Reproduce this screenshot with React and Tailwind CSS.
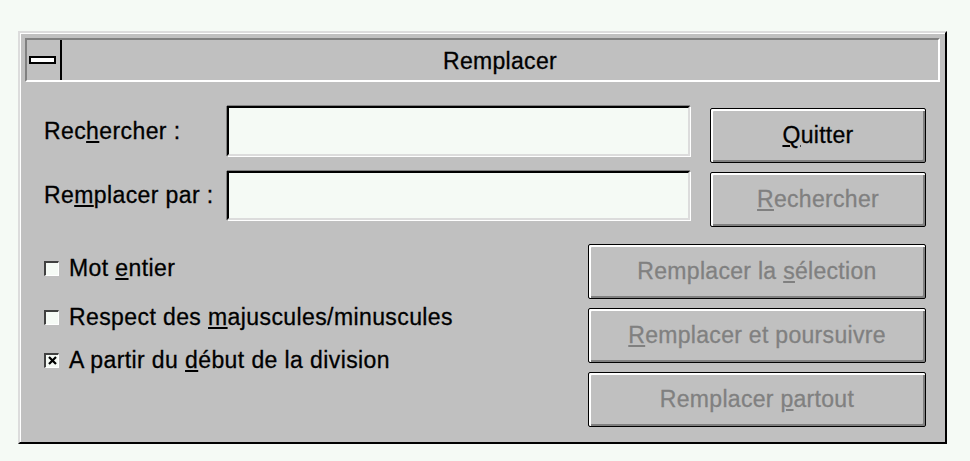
import React from "react";

const font = { fontFamily: '"Liberation Sans", Arial, sans-serif' };

function Btn({ children, disabled, className = "" }) {
  return (
    <div
      className={
        "flex items-center justify-center h-[55px] border border-black rounded-[2px] bg-[#c0c0c0] shadow-[inset_2px_2px_0_#ffffff,inset_-2px_-2px_0_#808080] text-[23px] tracking-[0.3px] " +
        (disabled ? "text-[#808080] " : "text-black ") +
        className
      }
    >
      <span>{children}</span>
    </div>
  );
}

function Check({ checked, children, className = "" }) {
  return (
    <div className={"flex items-center h-[26px] " + className}>
      <div className="w-[15px] h-[15px] flex items-center justify-center bg-[#f5faf5] border-t-2 border-l-2 border-[#404040] border-b border-r border-b-[#ffffff] border-r-[#ffffff]">
        {checked && (
          <svg width="9" height="9" viewBox="0 0 9 9">
            <path d="M1 1 L8 8 M8 1 L1 8" stroke="#000" strokeWidth="2.2" />
          </svg>
        )}
      </div>
      <span className="ml-[10px] text-[23px] tracking-[0.4px] text-black">{children}</span>
    </div>
  );
}

function Field() {
  return (
    <div className="w-[463px] h-full bg-[#f5faf5] border-t-2 border-l-2 border-t-[#000] border-l-[#000] border-b-2 border-r-2 border-b-[#dcdcdc] border-r-[#dcdcdc] shadow-[0_-1px_0_#808080,-1px_0_0_#808080,1px_1px_0_#ffffff]" />
  );
}

export default function App() {
  return (
    <div className="h-[461px] w-[970px] bg-[#f5faf5] pt-[31px] pl-[18px] [-webkit-text-stroke:0.3px]" style={font}>
      <div className="w-[929px] h-[413px] bg-[#c0c0c0] border-2 border-t-[#dcdcdc] border-l-[#dcdcdc] border-b-black border-r-black shadow-[inset_1px_1px_0_#ffffff] p-[5px]">
        {/* barre de titre */}
        <div className="h-[44px] flex border-2 border-t-[#808080] border-l-[#808080] border-b-white border-r-white">
          <div className="w-[35px] border-r-2 border-black flex items-center pl-[2px]">
            <div className="w-[27px] h-[8px] bg-white border-2 border-black" />
          </div>
          <div className="flex-1 flex items-center justify-center text-[23px] tracking-[0.3px] text-black pt-[2px]">
            Remplacer
          </div>
        </div>

        {/* champs */}
        <div className="flex mt-[24px] pl-[19px]">
          <div className="flex flex-col gap-[15px]">
            <div className="flex items-center h-[50px]">
              <span className="w-[183px] text-[23px] tracking-[0.4px] text-black">
                Rec<u className="underline-offset-2">h</u>ercher :
              </span>
              <Field />
            </div>
            <div className="flex items-center h-[49px]">
              <span className="w-[183px] text-[23px] tracking-[0.4px] text-black">
                Re<u className="underline-offset-2">m</u>placer par :
              </span>
              <Field />
            </div>
          </div>
          <div className="flex flex-col gap-[9px] ml-[20px] mt-[2px] w-[216px]">
            <Btn>
              <u className="underline-offset-2">Q</u>uitter
            </Btn>
            <Btn disabled>
              <u className="underline-offset-2">R</u>echercher
            </Btn>
          </div>
        </div>

        {/* options */}
        <div className="flex mt-[17px] pl-[19px]">
          <div className="flex-1">
            <Check className="mt-[11px]">
              Mot <u className="underline-offset-2">e</u>ntier
            </Check>
            <Check className="mt-[23px]">
              Respect des <u className="underline-offset-2">m</u>ajuscules/minuscules
            </Check>
            <Check checked className="mt-[17px]">
              A partir du <u className="underline-offset-2">d</u>ébut de la division
            </Check>
          </div>
          <div className="flex flex-col gap-[9px] w-[338px] mr-[14px]">
            <Btn disabled>
              Remplacer la <u className="underline-offset-2">s</u>élection
            </Btn>
            <Btn disabled>
              <u className="underline-offset-2">R</u>emplacer et poursuivre
            </Btn>
            <Btn disabled>
              Remplacer <u className="underline-offset-2">p</u>artout
            </Btn>
          </div>
        </div>
      </div>
    </div>
  );
}
